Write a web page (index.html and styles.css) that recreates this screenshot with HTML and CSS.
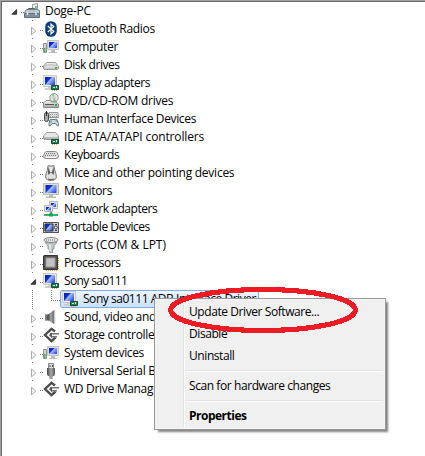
FILE: index.html
```
<!DOCTYPE html>
<html lang="en">
<head>
<meta charset="utf-8">
<title>Device Manager</title>
<link rel="stylesheet" href="styles.css">
</head>
<body>
<svg class="defs" width="0" height="0" aria-hidden="true">
  <defs>
    <linearGradient id="blue" x1="0" y1="0" x2="1" y2=".7"><stop offset="0" stop-color="#0519a8"/><stop offset=".42" stop-color="#1034dc"/><stop offset=".52" stop-color="#a9bdfb"/><stop offset="1" stop-color="#2f55ea"/></linearGradient>
    <linearGradient id="metal" x1="0" y1="0" x2="0" y2="1"><stop offset="0" stop-color="#f8f8f8"/><stop offset="1" stop-color="#a8a8a8"/></linearGradient>
    <linearGradient id="dark" x1="0" y1="0" x2="1" y2="0"><stop offset="0" stop-color="#444"/><stop offset=".5" stop-color="#aaa"/><stop offset="1" stop-color="#555"/></linearGradient>
    <symbol id="closed" viewBox="0 0 8 10"><path d="M1.500 1.200v7.600L5.800 5z" fill="#fff" stroke="#a6a6a6"/></symbol>
    <symbol id="open" viewBox="0 0 8 8"><path d="M5.600 1.500v4.800H.9z" fill="#404040" stroke="#262626" stroke-width=".8"/></symbol>
    <symbol id="chip" viewBox="0 0 16 16"><path d="M8.500 10.500h7v4h-7z" fill="#2a7a55" stroke="#0f5236"/><path d="M10 12h2v1h-2zM13 11h1v2h-1z" fill="#c9f0d6"/><path d="M9 15.500h5" stroke="#d1b24e" stroke-dasharray="1 1"/></symbol>
    <symbol id="pc" viewBox="0 0 16 16"><path d="M5 11h4v2h3v2H2v-2h3z" fill="#cdcdc6"/><path d="M.5.5h13v11H.5z" fill="#ecece7" stroke="#cacac3"/><path d="M2 2h10v8H2z" fill="url(#blue)"/><use href="#chip"/></symbol>
    <symbol id="computer" viewBox="0 0 16 16"><path d="M4.500 1.500h11v9h-11z" fill="#dedfe2" stroke="#c0c2c6"/><path d="M6 3h8v6H6z" fill="url(#blue)"/><path d="M8 11h4v2h2v1H6v-1h2z" fill="#bcbcbc"/><path d="M.5 4.500h3v9h-3z" fill="#d4d4d4" stroke="#929292"/><path d="M1 9h1.500v4H1z" fill="#4ab84a"/></symbol>
    <symbol id="root" viewBox="0 0 16 16"><path d="M8.500 1.500l5-1v10h-5z" fill="#eee" stroke="#999"/><path d="M11 3h2v5h-2z" fill="#6fc572"/><path d="M4.500 7V5.500h6V7" fill="none" stroke="#53606b"/><path d="M1.500 7.500l1-1h11l2 1v3H.5z" fill="#bdc8d0" stroke="#71808b"/><path d="M.5 10.500h15v4H.5z" fill="#83939e" stroke="#5f6e79"/><path d="M3.500 9v3M12 9v3" stroke="#e4eaee" stroke-width="1.500"/></symbol>
    <symbol id="bt" viewBox="0 0 16 16"><rect x="2.200" y=".2" width="11.600" height="15.600" rx="5.500" fill="#0e3d79"/><path d="M4.800 5l6 5.500L8 13V3l2.800 2.500-6 5.500" fill="none" stroke="#fff" stroke-width="1.200"/></symbol>
    <symbol id="disk" viewBox="0 0 16 16"><path d="M3.500 5.500h9l3 4v1.500q0 1.500-1.500 1.500H2Q.5 12.500.5 11V9z" fill="url(#metal)" stroke="#999"/><path d="M1 8.500Q8 7 15 8.500v3.300H1z" fill="#ddd" stroke="#aaa" stroke-width=".6"/><path d="M12 10h2v1.500h-2z" fill="#3ba23c"/></symbol>
    <symbol id="dvd" viewBox="0 0 16 16"><circle cx="11" cy="4.700" r="4.200" fill="#e5e8e5" stroke="#949894"/><path d="M11 4.500L8.500 1.500 11 .9zM11 5l2.500 3H10z" fill="#77c887"/><circle cx="11" cy="4.700" r="1.100" fill="#fff" stroke="#999" stroke-width=".7"/><path d="M3 7.500h4l2 1.500h4l2.500 2v3.500H.5V10z" fill="url(#metal)" stroke="#888"/><path d="M2 11.500h9" stroke="#555"/><path d="M12 11h2v2h-2z" fill="#35a33a"/></symbol>
    <symbol id="hid" viewBox="0 0 16 16"><path d="M6 1.500h9l.5 5H6z" fill="#ddd" stroke="#999"/><path d="M7 3.500h8M7 5.500h8" stroke="#999" stroke-dasharray="1 1"/><rect x="1.500" y="1.500" width="4" height="9" rx="2" fill="#aaa" stroke="#444"/><path d="M3.500 0v5" stroke="#333"/><path d="M7 8.500q1-1 2 0h3q1-1 2 0l1.500 4q.5 3-1 2.500l-2-2.500H9l-2 2.500q-1.500.5-1-2.500z" fill="#c6dbe2" stroke="#647882"/><path d="M8 9.500v2M12.500 10h1.500" stroke="#4e737f"/></symbol>
    <symbol id="ide" viewBox="0 0 16 16"><path d="M3.500 3.500h9l3 3.500v3.500H2Q.5 10.500.5 9V7z" fill="url(#metal)" stroke="#999"/><path d="M1.500 7h13" stroke="#fff"/><use href="#chip"/></symbol>
    <symbol id="kbd" viewBox="0 0 16 16"><path d="M3.500 4.500h9q1 0 1.500 1l1.500 3q0 3-2 3h-11q-2 0-2-3L2 5.500q.5-1 1.500-1z" fill="#ddd" stroke="#888"/><path d="M3 6.500h10M2 8.500h12" stroke="#777" stroke-dasharray="1 1"/><path d="M3 10.500h10" stroke="#fff"/></symbol>
    <symbol id="mouse" viewBox="0 0 16 16"><path d="M5 .7q3 .7 6 0 .6 5 2 8.300 2 6.500-5 6.500T3 9Q4.500 5.700 5 .7z" fill="#dedede" stroke="#777"/><path d="M5.500 2Q4.500 7 5.500 10L8 7l2.500 3q1-3 0-8L9 7H7z" fill="#555"/><path d="M8 2v5" stroke="#eee"/><path d="M5 14q3 1.500 6 0" stroke="#555" fill="none"/></symbol>
    <symbol id="monitor" viewBox="0 0 16 16"><path d="M.5.5h15v11H.5z" fill="#deded9" stroke="#bcbcb4"/><path d="M2.500 2h11v8h-11z" fill="url(#blue)"/><path d="M6 12h4v1.500h3V15H3v-1.500h3z" fill="#bcbcb3"/></symbol>
    <symbol id="net" viewBox="0 0 16 16"><path d="M6.500.5h8v7h-8z" fill="#e5e5e5" stroke="#b5b5b5"/><path d="M8 2h5v4H8z" fill="url(#blue)"/><path d="M1.500 4.500h8v6h-8z" fill="#eee" stroke="#b5b5b5"/><path d="M3 6h5v3.500H3z" fill="url(#blue)"/><path d="M8 11v3M1 14h14" stroke="#37b26a" stroke-width="2"/><path d="M6 12.500h4v3H6z" fill="#18a257"/></symbol>
    <symbol id="portable" viewBox="0 0 16 16"><path d="M.5 3.500h15v10H.5z" fill="#c9ced4" stroke="#555"/><path d="M2 5h8v7H2z" fill="url(#blue)" stroke="#333"/><circle cx="12.800" cy="8.500" r="1.500" fill="#fff" stroke="#333"/><path d="M12 5.500h2M12 11.500h2" stroke="#333"/></symbol>
    <symbol id="port" viewBox="0 0 16 16"><ellipse cx="8" cy="3" rx="7" ry="2.500" fill="#e4e4e4" stroke="#888"/><path d="M3 3h10" stroke="#666" stroke-dasharray="1 1"/><path d="M2 5q6 2 12 0l-3 4v3H9.500v4h-3v-4H5V9z" fill="#c0c5c8" stroke="#858c90" stroke-width=".8"/><path d="M7 7v7" stroke="#fff"/></symbol>
    <symbol id="cpu" viewBox="0 0 16 16"><path d="M15.500 3v11M3 15.500h11" stroke="#d4ad4b" stroke-width="1.500" stroke-dasharray="1 1"/><path d="M1 .5h13.500v14H.5V1z" fill="#555" stroke="#333"/><path d="M3 3h9v9H3z" fill="#c2c2c2" stroke="#999"/></symbol>
    <symbol id="sound" viewBox="0 0 16 16"><path d="M2 5.500h4v6H2z" fill="#555"/><path d="M5 5.500L11 1v14l-6-4z" fill="url(#dark)"/><path d="M3 5.500v6" stroke="#aaa"/><path d="M11.500 1v14" stroke="#c1c9cf" stroke-width="1.500"/></symbol>
    <symbol id="storage" viewBox="0 0 16 16"><path d="M12 4.500L8.500 1.800 2 8 8.500 14.200 12.500 10.500" fill="none" stroke="#4c4c4c" stroke-width="2.400"/><path d="M7 6.700H16M8 9.700h6" stroke="#777" stroke-width="1.500"/><path d="M6 8.200L9 5.500v5.400z" fill="#555"/></symbol>
    <symbol id="usb" viewBox="0 0 16 16"><path d="M5.500.5h5v5h-5z" fill="#ddd" stroke="#888"/><path d="M6.500 2h1v2h-1zM9 2h1v2H9z" fill="#555"/><path d="M4 5h8v6q0 2-2.500 2.500V16h-3v-2.500Q4 13 4 11z" fill="url(#dark)"/></symbol>
  </defs>
</svg>
<main class="tree">
  <div class="row root"><svg class="arrow"><use href="#open"/></svg><i class="stub"></i><svg class="icon"><use href="#root"/></svg><span>Doge-PC</span></div>
  <div class="row"><svg class="arrow"><use href="#closed"/></svg><i class="stub"></i><svg class="icon"><use href="#bt"/></svg><span>Bluetooth Radios</span></div>
  <div class="row"><svg class="arrow"><use href="#closed"/></svg><i class="stub"></i><svg class="icon"><use href="#computer"/></svg><span>Computer</span></div>
  <div class="row"><svg class="arrow"><use href="#closed"/></svg><i class="stub"></i><svg class="icon"><use href="#disk"/></svg><span class="tight">Disk drives</span></div>
  <div class="row"><svg class="arrow"><use href="#closed"/></svg><i class="stub"></i><svg class="icon"><use href="#pc"/></svg><span class="tight">Display adapters</span></div>
  <div class="row"><svg class="arrow"><use href="#closed"/></svg><i class="stub"></i><svg class="icon"><use href="#dvd"/></svg><span class="wide">DVD/CD-ROM drives</span></div>
  <div class="row"><svg class="arrow"><use href="#closed"/></svg><i class="stub"></i><svg class="icon"><use href="#hid"/></svg><span class="snug">Human Interface Devices</span></div>
  <div class="row"><svg class="arrow"><use href="#closed"/></svg><i class="stub"></i><svg class="icon"><use href="#ide"/></svg><span class="wider">IDE ATA/ATAPI controllers</span></div>
  <div class="row"><svg class="arrow"><use href="#closed"/></svg><i class="stub"></i><svg class="icon"><use href="#kbd"/></svg><span class="tight">Keyboards</span></div>
  <div class="row"><svg class="arrow"><use href="#closed"/></svg><i class="stub"></i><svg class="icon"><use href="#mouse"/></svg><span class="wide">Mice and other pointing devices</span></div>
  <div class="row"><svg class="arrow"><use href="#closed"/></svg><i class="stub"></i><svg class="icon"><use href="#monitor"/></svg><span>Monitors</span></div>
  <div class="row"><svg class="arrow"><use href="#closed"/></svg><i class="stub"></i><svg class="icon"><use href="#net"/></svg><span class="tight">Network adapters</span></div>
  <div class="row"><svg class="arrow"><use href="#closed"/></svg><i class="stub"></i><svg class="icon"><use href="#portable"/></svg><span class="tight">Portable Devices</span></div>
  <div class="row"><svg class="arrow"><use href="#closed"/></svg><i class="stub"></i><svg class="icon"><use href="#port"/></svg><span class="widest">Ports (COM &amp; LPT)</span></div>
  <div class="row"><svg class="arrow"><use href="#closed"/></svg><i class="stub"></i><svg class="icon"><use href="#cpu"/></svg><span class="tight">Processors</span></div>
  <div class="row expanded"><svg class="arrow"><use href="#open"/></svg><i class="stub"></i><svg class="icon"><use href="#pc"/></svg><span class="tighter">Sony sa0111</span></div>
  <div class="row child"><i class="trunk"></i><i class="elbow"></i><div class="selected"><svg class="icon"><use href="#pc"/></svg><span class="tight">Sony sa0111 ADB Interface Driver</span></div></div>
  <div class="row"><svg class="arrow"><use href="#closed"/></svg><i class="stub"></i><svg class="icon"><use href="#sound"/></svg><span>Sound, video and game controllers</span></div>
  <div class="row"><svg class="arrow"><use href="#closed"/></svg><i class="stub"></i><svg class="icon"><use href="#storage"/></svg><span>Storage controllers</span></div>
  <div class="row"><svg class="arrow"><use href="#closed"/></svg><i class="stub"></i><svg class="icon"><use href="#computer"/></svg><span class="snug">System devices</span></div>
  <div class="row"><svg class="arrow"><use href="#closed"/></svg><i class="stub"></i><svg class="icon"><use href="#usb"/></svg><span>Universal Serial Bus controllers</span></div>
  <div class="row"><svg class="arrow"><use href="#closed"/></svg><i class="stub"></i><svg class="icon"><use href="#storage"/></svg><span>WD Drive Management</span></div>
</main>
<nav class="menu">
  <div class="item"><span>Update Driver Software...</span></div>
  <div class="item"><span>Disable</span></div>
  <div class="item"><span>Uninstall</span></div>
  <div class="sep"></div>
  <div class="item"><span>Scan for hardware changes</span></div>
  <div class="sep"></div>
  <div class="item strong"><span>Properties</span></div>
</nav>
<svg class="mark" width="196" height="52" viewBox="0 0 196 52"><ellipse cx="98" cy="26" rx="92.300" ry="20.500" fill="none" stroke="#ed1c24" stroke-width="5.200" shape-rendering="crispEdges"/></svg>
</body>
</html>
```
FILE: styles.css
```
* { box-sizing: border-box; }
body {
  margin: 0;
  height: 456px;
  overflow: hidden;
  background: #fff;
  color: #000;
  font: 12px/18px "Open Sans", "Noto Sans", sans-serif;
  letter-spacing: -0.3px;
}
.defs { position: absolute; }
.tree {
  height: 456px;
  border-top: 1px solid #a0a0a0;
  border-left: 1px solid #a0a0a0;
  box-shadow: inset 1px 1px #696969;
  padding: 1px 0 0 1px;
}
.row {
  display: flex;
  align-items: center;
  height: 18px;
  padding-left: 28px;
  white-space: nowrap;
  background: linear-gradient(#777, #777) 30px 0 / 1px 1px no-repeat;
}
.root { padding-left: 9px; background: none; }
.arrow { width: 8px; height: 10px; flex: none; margin-top: 3px; }
.root .arrow, .expanded .arrow { height: 8px; margin-top: 2px; }
.stub {
  width: 3px;
  height: 1px;
  flex: none;
  margin: 2px 0 0 2px;
  background: repeating-linear-gradient(90deg, #777 0 1px, transparent 1px 2px);
}
.icon { width: 16px; height: 16px; flex: none; }
.row > .icon + span { margin-left: 5px; }

/* Tracking per label width */
.tighter { letter-spacing: -0.62px; }
.tight { letter-spacing: -0.46px; }
.snug { letter-spacing: -0.35px; }
.wide { letter-spacing: -0.25px; }
.wider { letter-spacing: -0.14px; }
.widest { letter-spacing: -0.02px; }

.child { background: none; padding-left: 30px; }
.trunk {
  width: 1px;
  height: 18px;
  background: repeating-linear-gradient(#777 0 1px, transparent 1px 2px);
}
.elbow {
  width: 9px;
  height: 11px;
  margin: -7px 0 0 18px;
  background:
    repeating-linear-gradient(#777 0 1px, transparent 1px 2px) 0 0 / 1px 11px no-repeat,
    repeating-linear-gradient(90deg, #777 0 1px, transparent 1px 2px) 0 10px / 9px 1px no-repeat;
}
.selected {
  display: flex;
  align-items: center;
  width: 199px;
  height: 18px;
  border: 1px solid #84acdd;
  border-radius: 2px;
  background: linear-gradient(#eff6fe, #c9e0fb);
  padding-left: 1px;
}
.selected span { margin-left: 5px; line-height: 16px; }
.menu {
  position: absolute;
  left: 154px;
  top: 298px;
  width: 232px;
  height: 132px;
  padding: 2px;
  border: 1px solid #979797;
  background: linear-gradient(90deg, #e2e3e3 1px, #fff 1px) 28px 2px / 2px 126px no-repeat, #f0f0f0;
  box-shadow: inset 0 0 0 1px #f5f5f5, 3px 3px 2px -1px rgba(0, 0, 0, .5);
  letter-spacing: -0.42px;
}
.item { height: 22px; line-height: 22px; padding-left: 32px; white-space: nowrap; }
.sep {
  height: 8px;
  margin-left: 28px;
  background: linear-gradient(#e0e0e0 1px, #fff 1px) 0 3px / 100% 2px no-repeat;
}
.strong { font-weight: 700; letter-spacing: -0.5px; }
.mark { position: absolute; left: 165px; top: 284px; }
```
